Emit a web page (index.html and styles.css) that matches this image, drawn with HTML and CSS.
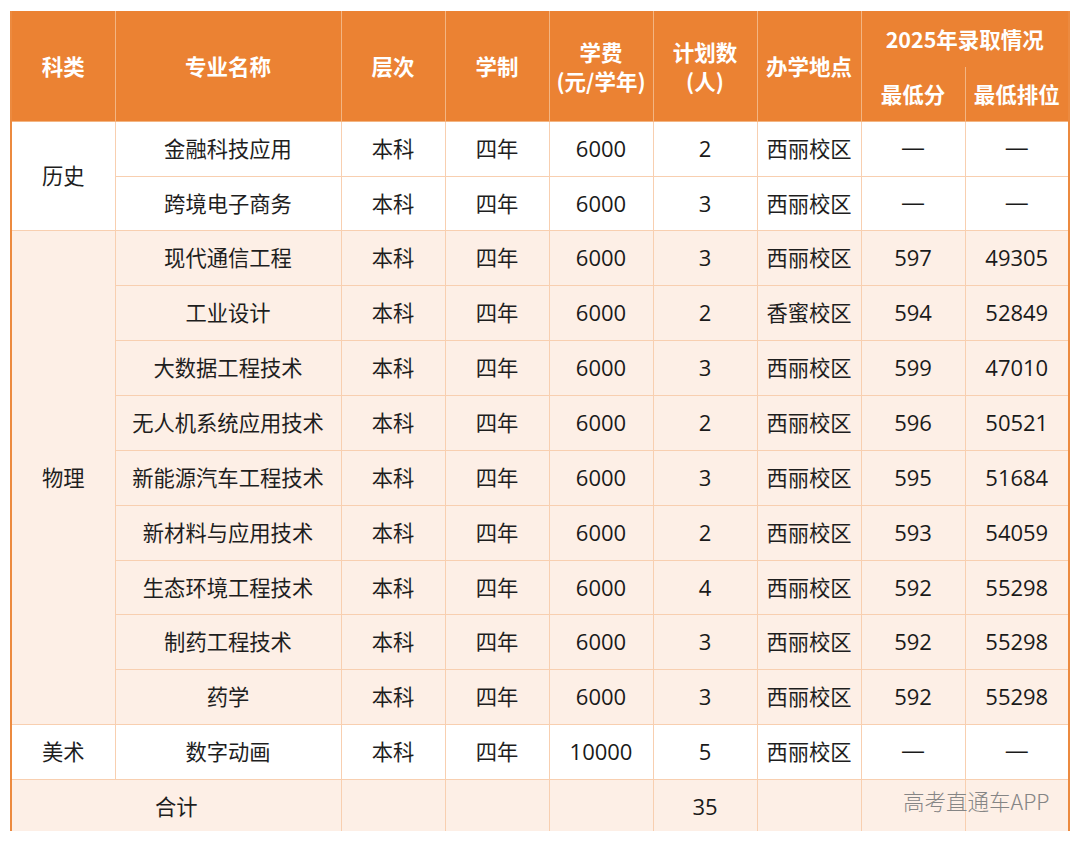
FILE: index.html
```html
<!DOCTYPE html>
<html lang="zh">
<head>
<meta charset="utf-8">
<link rel="stylesheet" href="styles.css">
</head>
<body>
<div class="page">
  <div class="frame">
    <table class="plan">
      <colgroup>
        <col class="c-narrow"><col class="c-wide"><col class="c-narrow"><col class="c-narrow"><col class="c-narrow"><col class="c-narrow"><col class="c-narrow"><col class="c-narrow"><col class="c-narrow">
      </colgroup>
      <thead>
        <tr class="h1">
          <th rowspan="2">科类</th>
          <th rowspan="2">专业名称</th>
          <th rowspan="2">层次</th>
          <th rowspan="2">学制</th>
          <th rowspan="2">学费<br>(元/学年)</th>
          <th rowspan="2">计划数<br>(人)</th>
          <th rowspan="2">办学地点</th>
          <th colspan="2" class="group">2025年录取情况</th>
        </tr>
        <tr class="h2">
          <th class="sub">最低分</th>
          <th class="sub">最低排位</th>
        </tr>
      </thead>
      <tbody>
        <tr class="r55 white"><td rowspan="2">历史</td><td>金融科技应用</td><td>本科</td><td>四年</td><td class="num">6000</td><td class="num">2</td><td>西丽校区</td><td class="dash">—</td><td class="dash">—</td></tr>
        <tr class="r54 white"><td>跨境电子商务</td><td>本科</td><td>四年</td><td class="num">6000</td><td class="num">3</td><td>西丽校区</td><td class="dash">—</td><td class="dash">—</td></tr>
        <tr class="r55 tint"><td rowspan="9">物理</td><td>现代通信工程</td><td>本科</td><td>四年</td><td class="num">6000</td><td class="num">3</td><td>西丽校区</td><td class="num">597</td><td class="num">49305</td></tr>
        <tr class="r55 tint"><td>工业设计</td><td>本科</td><td>四年</td><td class="num">6000</td><td class="num">2</td><td>香蜜校区</td><td class="num">594</td><td class="num">52849</td></tr>
        <tr class="r55 tint"><td>大数据工程技术</td><td>本科</td><td>四年</td><td class="num">6000</td><td class="num">3</td><td>西丽校区</td><td class="num">599</td><td class="num">47010</td></tr>
        <tr class="r55 tint"><td>无人机系统应用技术</td><td>本科</td><td>四年</td><td class="num">6000</td><td class="num">2</td><td>西丽校区</td><td class="num">596</td><td class="num">50521</td></tr>
        <tr class="r55 tint"><td>新能源汽车工程技术</td><td>本科</td><td>四年</td><td class="num">6000</td><td class="num">3</td><td>西丽校区</td><td class="num">595</td><td class="num">51684</td></tr>
        <tr class="r55 tint"><td>新材料与应用技术</td><td>本科</td><td>四年</td><td class="num">6000</td><td class="num">2</td><td>西丽校区</td><td class="num">593</td><td class="num">54059</td></tr>
        <tr class="r54 tint"><td>生态环境工程技术</td><td>本科</td><td>四年</td><td class="num">6000</td><td class="num">4</td><td>西丽校区</td><td class="num">592</td><td class="num">55298</td></tr>
        <tr class="r55 tint"><td>制药工程技术</td><td>本科</td><td>四年</td><td class="num">6000</td><td class="num">3</td><td>西丽校区</td><td class="num">592</td><td class="num">55298</td></tr>
        <tr class="r55 tint"><td>药学</td><td>本科</td><td>四年</td><td class="num">6000</td><td class="num">3</td><td>西丽校区</td><td class="num">592</td><td class="num">55298</td></tr>
        <tr class="r55 white"><td>美术</td><td>数字动画</td><td>本科</td><td>四年</td><td class="num">10000</td><td class="num">5</td><td>西丽校区</td><td class="dash">—</td><td class="dash">—</td></tr>
        <tr class="r55 tint total"><td colspan="2">合计</td><td></td><td></td><td></td><td class="num">35</td><td></td><td></td><td></td></tr>
      </tbody>
    </table>
    <div class="watermark">高考直通车APP</div>
  </div>
</div>
</body>
</html>
```

FILE: styles.css
```css
html, body {
  margin: 0;
  padding: 0;
  background: #ffffff;
}

.page {
  width: 1080px;
  height: 842px;
  overflow: hidden;
  padding: 11px 0 0 10px;
  box-sizing: border-box;
}

.frame {
  position: relative;
  width: 1060px;
  height: 820px;
  overflow: hidden;
}

.plan {
  border-collapse: collapse;
  table-layout: fixed;
  width: 1060px;
  border-left: 2px solid #ec8a3f;
  border-right: 2px solid #ec8a3f;
  font-family: "Noto Sans CJK SC", "Noto Sans", sans-serif;
  font-size: 21.3px;
  color: #1e1e1e;
}

.c-narrow { width: 104px; }
.c-wide { width: 226px; }

.plan th {
  background: #eb8233;
  color: #ffffff;
  font-size: 21.5px;
  font-weight: 700;
  line-height: 29px;
  padding: 0;
  text-align: center;
  vertical-align: middle;
  border: 1px solid #f3b582;
  border-top: none;
}

.plan th.group {
  border-bottom: 1px solid #eb8233;
}

.plan .h1 { height: 55px; }
.plan .h2 { height: 55px; }

.plan td {
  text-align: center;
  vertical-align: middle;
  padding: 0 0 1px 0;
  line-height: 28px;
  border: 1px solid #f8cfb0;
}

.plan td.num {
  font-family: "Open Sans", "Noto Sans", sans-serif;
  font-size: 22px;
  color: #1a1a1a;
}

.plan td.dash {
  font-family: "Liberation Sans", sans-serif;
  font-size: 22px;
  color: #1a1a1a;
}

.plan .r55 { height: 55px; }
.plan .r54 { height: 54px; }

.plan .white td { background: #ffffff; }
.plan .tint td { background: #fdefe6; }
.plan .white td[rowspan] { background: #ffffff; }

.watermark {
  position: absolute;
  left: 893px;
  top: 774px;
  font-family: "Noto Sans CJK SC", "Noto Sans", sans-serif;
  font-size: 21.5px;
  font-weight: 300;
  color: #858585;
}
```
